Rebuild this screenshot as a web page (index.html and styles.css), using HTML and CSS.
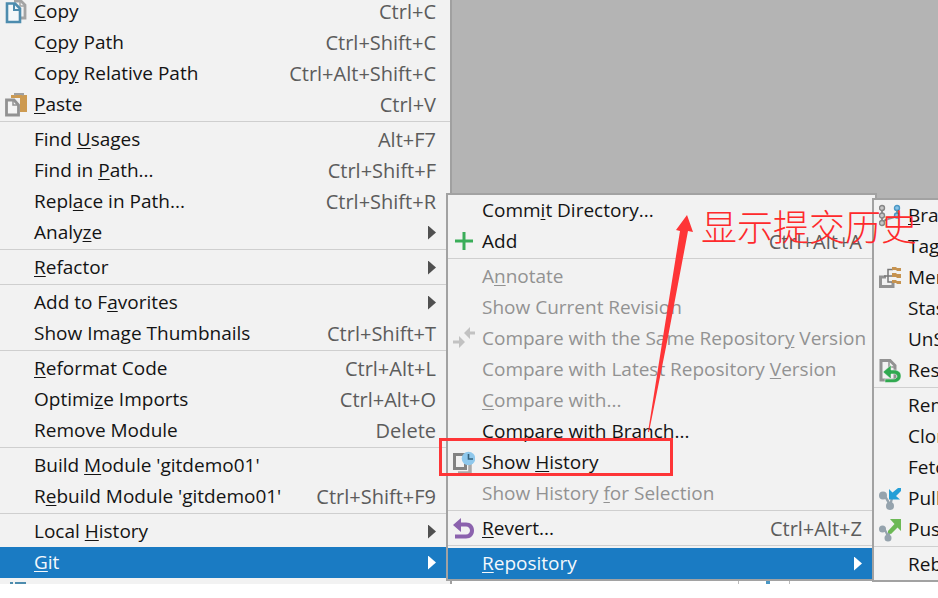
FILE: index.html
```html
<!DOCTYPE html>
<html lang="en">
<head>
<meta charset="utf-8">
<title>Context menu</title>
<link rel="stylesheet" href="styles.css">
</head>
<body>
<main class="desktop">
  <nav class="menu root" aria-label="Project">
    <button class="item"><svg class="icon" viewBox="0 0 22 24"><path d="M9 1h7l4 4v13H15" fill="none" stroke="#a3a3a3" stroke-width="2.800"/><path d="M15 2v4h5" fill="none" stroke="#a3a3a3" stroke-width="1.500"/><path d="M2 3.500h8l5 5V22H2z" fill="#f4f8fa" stroke="#4d8cae" stroke-width="2.600"/><path d="M9 4v6h6" fill="none" stroke="#4d8cae" stroke-width="2"/></svg><span class="label"><u>C</u>opy</span><kbd>Ctrl+C</kbd></button>
    <button class="item"><span class="label">C<u>o</u>py Path</span><kbd>Ctrl+Shift+C</kbd></button>
    <button class="item"><span class="label">Cop<u>y</u> Relative Path</span><kbd>Ctrl+Alt+Shift+C</kbd></button>
    <button class="item"><svg class="icon" viewBox="0 0 22 24"><path d="M6 2h16v17H6z" fill="#cd9a50"/><path d="M10 2.500V1h8v1.500" fill="none" stroke="#a0a0a0" stroke-width="2"/><path d="M0 5h15v19H0z" fill="#f2f2f2"/><path d="M1.500 7H9l4.500 5v10h-12z" fill="#f5f5f5" stroke="#929292" stroke-width="2.800"/><path d="M8 7v5h5" fill="none" stroke="#929292" stroke-width="1.500"/></svg><span class="label"><u>P</u>aste</span><kbd>Ctrl+V</kbd></button>
    <hr>
    <button class="item"><span class="label">Find <u>U</u>sages</span><kbd>Alt+F7</kbd></button>
    <button class="item"><span class="label">Find in <u>P</u>ath...</span><kbd>Ctrl+Shift+F</kbd></button>
    <button class="item"><span class="label">Repl<u>a</u>ce in Path...</span><kbd>Ctrl+Shift+R</kbd></button>
    <button class="item"><span class="label">Analy<u>z</u>e</span><i class="more"></i></button>
    <hr>
    <button class="item"><span class="label"><u>R</u>efactor</span><i class="more"></i></button>
    <hr>
    <button class="item"><span class="label">Add to F<u>a</u>vorites</span><i class="more"></i></button>
    <button class="item"><span class="label">Show Image Thumbnails</span><kbd>Ctrl+Shift+T</kbd></button>
    <hr>
    <button class="item"><span class="label"><u>R</u>eformat Code</span><kbd>Ctrl+Alt+L</kbd></button>
    <button class="item"><span class="label">Optimi<u>z</u>e Imports</span><kbd>Ctrl+Alt+O</kbd></button>
    <button class="item"><span class="label">Remove Module</span><kbd>Delete</kbd></button>
    <hr>
    <button class="item"><span class="label">Build <u>M</u>odule 'gitdemo01'</span></button>
    <button class="item"><span class="label">R<u>e</u>build Module 'gitdemo01'</span><kbd>Ctrl+Shift+F9</kbd></button>
    <hr>
    <button class="item"><span class="label">Local <u>H</u>istory</span><i class="more"></i></button>
    <button class="item selected"><span class="label"><u>G</u>it</span><i class="more"></i></button>
    <div class="cut"><svg class="cut-icon" viewBox="0 0 16 2"><path d="M0 1h3M5 1h11" stroke="#4d8cae" stroke-width="2"/></svg></div>
  </nav>
  <div class="canvas"></div>

  <nav class="menu git" aria-label="Git">
    <button class="item"><span class="label">Comm<u>i</u>t Directory...</span></button>
    <button class="item"><svg class="icon" viewBox="0 0 22 24"><path d="M11 2v18M2 11h18" stroke="#3aad59" stroke-width="3"/></svg><span class="label">Add</span><kbd>Ctrl+Alt+A</kbd></button>
    <hr>
    <button class="item" disabled><span class="label">A<u>n</u>notate</span></button>
    <button class="item" disabled><span class="label">Show Current Revision</span></button>
    <button class="item" disabled><svg class="icon" viewBox="0 0 22 24"><g fill="#c2c2c2"><path d="M11 6l6-6v4.500h5v3h-5V12z"/><path d="M12 15l-6-6v4.500H0v3h6V21z"/></g></svg><span class="label">Compare with the Same Repositor<u>y</u> Version</span></button>
    <button class="item" disabled><span class="label">Compare with Latest Repository <u>V</u>ersion</span></button>
    <button class="item" disabled><span class="label"><u>C</u>ompare with...</span></button>
    <button class="item"><span class="label">Compare with Branch...</span></button>
    <button class="item"><svg class="icon" viewBox="0 0 22 24"><path d="M5 22h12V12" fill="none" stroke="#aaa" stroke-width="3.500"/><path d="M1.500 3.500h11v14h-11z" fill="#f2f2f2" stroke="#828282" stroke-width="3"/><circle cx="15.500" cy="7.500" r="6.800" fill="#8fc8ec"/><path d="M15.500 3V8h4.500" fill="none" stroke="#35617c" stroke-width="1.600"/></svg><span class="label">Show <u>H</u>istory</span></button>
    <button class="item" disabled><span class="label">Show History <u>f</u>or Selection</span></button>
    <hr>
    <button class="item"><svg class="icon" viewBox="0 0 22 24"><path d="M0 8l8-7v4.500h5c5 0 8 3.500 8 8s-3 8-8 8H2v-4h11c2.500 0 4-1.700 4-4s-1.500-4-4-4H8V15z" fill="#8b62ad"/></svg><span class="label"><u>R</u>evert...</span><kbd>Ctrl+Alt+Z</kbd></button>
    <hr>
    <button class="item selected"><span class="label"><u>R</u>epository</span><i class="more"></i></button>
  </nav>

  <nav class="menu repository" aria-label="Repository">
    <button class="item"><svg class="icon" viewBox="0 0 22 24"><path d="M3 3v18M18 4v7c0 4-14 2-15 9" fill="none" stroke="#8e8e8e" stroke-width="2"/><g fill="#c8c8c8" stroke="#858585" stroke-width="1.400"><circle cx="3" cy="4" r="2.500"/><circle cx="3" cy="11.500" r="2.500"/><circle cx="3" cy="19" r="2.500"/></g><g fill="#88c4e8" stroke="#4a97c4" stroke-width="1.400"><circle cx="18" cy="4" r="2.500"/><circle cx="18" cy="11.500" r="2.500"/></g></svg><span class="label"><u>B</u>ranches...</span></button>
    <button class="item"><span class="label">Tag...</span></button>
    <button class="item"><svg class="icon" viewBox="0 0 22 24"><path d="M7 11H1.500v9.500H14V16" fill="none" stroke="#929292" stroke-width="3"/><path d="M14 3.500H9V16h5M5 10h9" fill="none" stroke="#777" stroke-width="1.500"/><g fill="#c69350"><path d="M13 1h4l1 1h4v3h-4l-1-1h-4z"/><path d="M13 7h4l1 1h4v4h-4l-1-1h-4z"/><path d="M13 14h4l1 1h4v3h-4l-1-1h-4z"/></g></svg><span class="label">Merge Changes...</span></button>
    <button class="item"><span class="label">Stash Changes...</span></button>
    <button class="item"><span class="label">UnStash Changes...</span></button>
    <button class="item"><svg class="icon" viewBox="0 0 22 24"><path d="M2 1.500h9l5 5V21H2z" fill="#f2f2f2" stroke="#929292" stroke-width="3"/><path d="M10 2v6h6" fill="none" stroke="#929292" stroke-width="1.500"/><path d="M4 13l8-7v5h3c4.500 0 7 2.500 7 6s-2.500 6.500-7 6.500H6v-3.500h8c2.500 0 4-1 4-2.700S16.500 15 14 15h-2v5z" fill="#31a950" stroke="#f2f2f2" stroke-width=".5"/></svg><span class="label">Reset HEAD...</span></button>
    <hr>
    <button class="item"><span class="label">Remotes...</span></button>
    <button class="item"><span class="label">Clone...</span></button>
    <button class="item"><span class="label">Fetch</span></button>
    <button class="item"><svg class="icon" viewBox="0 0 22 24"><path d="M3.500 8c3 1 5 4 7.500 11L13 11" fill="none" stroke="#95a3ad" stroke-width="2.400"/><circle cx="4" cy="8.500" r="4" fill="#95a3ad"/><circle cx="11" cy="19" r="4" fill="#95a3ad"/><path d="M10 2l3.500 3.500L19 1h3v3l-5 5 4 3.500H10z" fill="#249fd7"/></svg><span class="label">Pull...</span></button>
    <button class="item"><svg class="icon" viewBox="0 0 22 24"><path d="M3.500 10c2.500 1 4 4 5.500 9l2-6" fill="none" stroke="#95a3ad" stroke-width="2.400"/><circle cx="3.500" cy="11" r="3.500" fill="#95a3ad"/><circle cx="9" cy="20" r="3.500" fill="#95a3ad"/><path d="M11 1h11v12l-3.500-3.500L12 16l-3-1v-2l6.500-7z" fill="#6cb955"/></svg><span class="label">Push...</span></button>
    <hr>
    <button class="item"><span class="label">Rebase...</span></button>
  </nav>

  <svg class="arrow" viewBox="0 0 50 222"><path d="M1 217L16 122 33 16l-4-1L40 0l6 17-5-1L21 122 2 217z" fill="#fe3537"/></svg>
  <div class="box"></div>
  <p class="note" lang="zh">显示提交历史</p>
  <div class="ticks"><i></i></div>
</main>
</body>
</html>
```
FILE: styles.css
```css
* { box-sizing: border-box; }

body {
  margin: 0;
  background: #fff;
  font: 19px/31px "Open Sans", "Noto Sans", sans-serif;
  color: #141414;
}

.desktop {
  position: relative;
  display: flex;
  overflow: hidden;
  min-height: 100vh;
  align-items: flex-start;
}

.canvas {
  flex: 1;
  align-self: stretch;
  margin-bottom: 24px;
  background: #b4b4b4;
}

.menu {
  display: flex;
  flex-direction: column;
  background: #f2f2f2;
}

.root {
  width: 452px;
  margin-top: -4px;
  border-right: 2px solid #a0a0a0;
}

.git,
.repository {
  position: absolute;
  border: 2px solid #a2a2a2;
}

.git {
  top: 193px;
  left: 446px;
  width: 431px;
}

.repository {
  top: 198px;
  left: 872px;
  right: 0;
  overflow: hidden;
  border-right: 0;
}

.item {
  position: relative;
  display: flex;
  align-items: center;
  height: 31px;
  padding: 0 13px 0 34px;
  border: 0;
  background: none;
  color: inherit;
  font: inherit;
  text-align: left;
  white-space: nowrap;
}

.root .item { padding-right: 14px; }

.item:disabled { color: #929292; }

.selected {
  background: #1a7bc3;
  color: #f4f8fc;
}

.label { flex: 1; }

u {
  text-decoration-thickness: 1px;
  text-underline-offset: 2px;
}

kbd {
  font: inherit;
  font-size: 20px;
  line-height: 29px;
  color: #5c5c5c;
}

.icon {
  position: absolute;
  left: 5px;
  top: 4px;
  width: 22px;
  height: 24px;
}

.more {
  width: 8px;
  height: 14px;
  background: #505050;
  clip-path: polygon(0 0, 100% 50%, 0 100%);
}

.selected .more { background: #fff; }

hr {
  width: 100%;
  height: 1px;
  margin: 1px 0 2px;
  border: 0;
  background: #cfcfcf;
}

.cut {
  display: flex;
  align-items: flex-end;
  height: 6px;
  padding-left: 10px;
}

.cut-icon {
  width: 16px;
  height: 2px;
}

.arrow {
  position: absolute;
  left: 647px;
  top: 215px;
  width: 50px;
  height: 222px;
}

.box {
  position: absolute;
  left: 439px;
  top: 438px;
  width: 234px;
  height: 38px;
  border: 3px solid #fe3537;
}

.note {
  position: absolute;
  left: 701px;
  top: 201px;
  margin: 0;
  color: #fe2a2c;
  font: 300 36px/48px "Noto Sans CJK SC", sans-serif;
  white-space: nowrap;
}

.ticks {
  position: absolute;
  left: 738px;
  top: 581px;
  width: 52px;
  height: 3px;
  padding-left: 27px;
  border: solid #bbb;
  border-width: 0 1px;
}

.ticks i {
  display: block;
  width: 4px;
  height: 3px;
  background: #4a97c4;
}
```
